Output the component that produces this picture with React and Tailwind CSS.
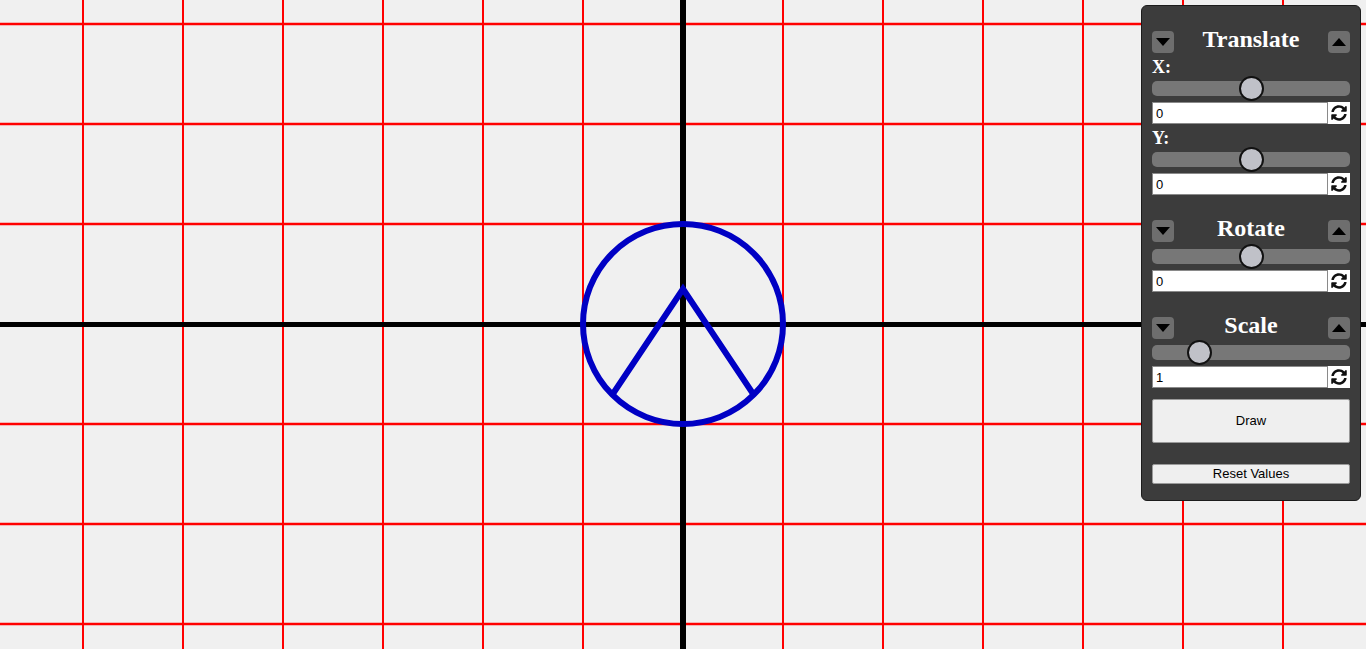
import React, { useState } from 'react';
import { FaSyncAlt } from 'react-icons/fa';

const W = 1366;
const H = 649;
const CX = 683;
const CY = 324;

function Grid() {
  const xs = [];
  for (let x = CX % 100; x < W; x += 100) xs.push(x);
  const ys = [];
  for (let y = CY % 100; y < H; y += 100) ys.push(y);
  const r = 100;
  const d = r * Math.SQRT1_2;

  return (
    <svg width={W} height={H} className="block">
      <rect width={W} height={H} fill="#f0f0f0" />
      {xs.map((x) => (
        <line key={'x' + x} x1={x} y1={0} x2={x} y2={H} stroke="#ff0000" strokeWidth={2} />
      ))}
      {ys.map((y) => (
        <line key={'y' + y} x1={0} y1={y} x2={W} y2={y} stroke="#ff0000" strokeWidth={2.5} />
      ))}
      <line x1={CX} y1={0} x2={CX} y2={H} stroke="#000" strokeWidth={6} />
      <line x1={0} y1={CY + 0.5} x2={W} y2={CY + 0.5} stroke="#000" strokeWidth={5} />
      <circle cx={CX} cy={CY} r={r} fill="none" stroke="#0000c4" strokeWidth={6} />
      <polyline
        points={`${CX - d},${CY + d} ${CX},${CY - 35} ${CX + d},${CY + d}`}
        fill="none"
        stroke="#0000c4"
        strokeWidth={6}
      />
    </svg>
  );
}

function Arrow({ up }) {
  return (
    <button className="w-[22px] h-[22px] rounded-[4px] bg-[#6e6e6e] flex items-center justify-center">
      <svg width="14" height="8" viewBox="0 0 14 8">
        {up ? <polygon points="0,8 7,0 14,8" fill="#000" /> : <polygon points="0,0 14,0 7,8" fill="#000" />}
      </svg>
    </button>
  );
}

function Header({ title }) {
  return (
    <div className="flex items-center justify-between h-[22px]">
      <Arrow />
      <h2 className="text-white font-bold text-[24px] leading-[22px] -mt-[6px] font-['Liberation_Serif',serif]">{title}</h2>
      <Arrow up />
    </div>
  );
}

function Label({ children }) {
  return <div className="text-white font-bold text-[18px] leading-[18px] font-['Liberation_Serif',serif]">{children}</div>;
}

function Slider({ pct }) {
  return (
    <div className="relative h-[25px] flex items-center">
      <div className="w-full h-[15px] rounded-[5px] bg-[#777777]" />
      <div
        className="absolute top-0 w-[25px] h-[25px] rounded-full bg-[#c0c1c8] border-2 border-[#111]"
        style={{ left: `${pct * 173}px` }}
      />
    </div>
  );
}

function ValueRow({ value }) {
  return (
    <div className="flex h-[22px] mt-px">
      <input
        readOnly
        value={value}
        className="flex-1 min-w-0 h-full bg-white border border-[#8a8a8a] px-[3px] text-[13px] text-black font-['Liberation_Sans',Arial,sans-serif] outline-none"
      />
      <button className="w-[22px] h-full bg-white flex items-center justify-center">
        <FaSyncAlt size={16} color="#111" />
      </button>
    </div>
  );
}

export default function App() {
  const [vals] = useState({ x: 0, y: 0, rot: 0, scale: 1 });

  return (
    <div className="relative w-[1366px] h-[649px] overflow-hidden bg-[#f0f0f0]">
      <Grid />

      <div className="absolute right-[5px] top-[5px] w-[220px] rounded-[6px] border border-[#1c1c1c] bg-[#3c3c3c] px-[10px] pt-[25px] pb-[16px]">
        <Header title="Translate" />
        <div className="mt-[5px]">
          <Label>X:</Label>
          <Slider pct={0.5} />
          <ValueRow value={vals.x} />
        </div>
        <div className="mt-[5px]">
          <Label>Y:</Label>
          <Slider pct={0.5} />
          <ValueRow value={vals.y} />
        </div>

        <div className="mt-[25px]">
          <Header title="Rotate" />
          <div className="mt-[2px]">
            <Slider pct={0.5} />
            <ValueRow value={vals.rot} />
          </div>
        </div>

        <div className="mt-[25px]">
          <Header title="Scale" />
          <div className="mt-px">
            <Slider pct={0.2} />
            <ValueRow value={vals.scale} />
          </div>
        </div>

        <button className="mt-[11px] w-full h-[44px] bg-[#efefef] border border-[#9a9a9a] rounded-[2px] text-[13px] text-black font-['Liberation_Sans',Arial,sans-serif]">
          Draw
        </button>
        <button className="mt-[21px] w-full h-[20px] bg-[#efefef] border border-[#9a9a9a] rounded-[2px] text-[13px] leading-[18px] text-black font-['Liberation_Sans',Arial,sans-serif]">
          Reset Values
        </button>
      </div>
    </div>
  );
}
